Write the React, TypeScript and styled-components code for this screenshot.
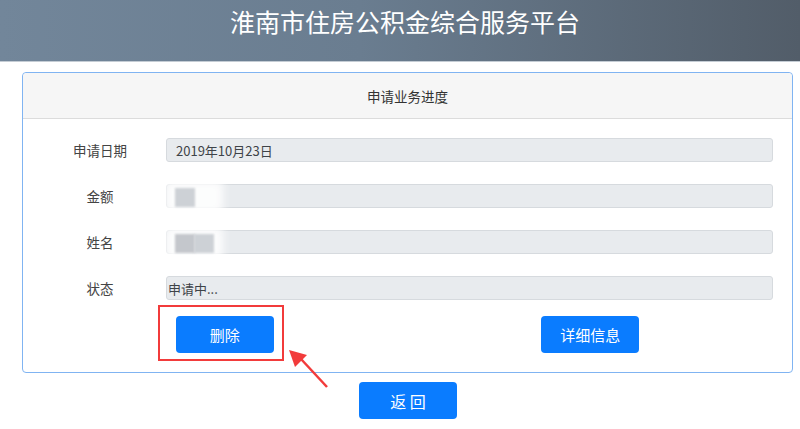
import React from "react";
import styled, { createGlobalStyle } from "styled-components";

interface Field {
  label: string;
  value?: string;
  blur?: "amount" | "name";
  tight?: boolean;
}

const fields: Field[] = [
  { label: "申请日期", value: "2019年10月23日" },
  { label: "金额", blur: "amount" },
  { label: "姓名", blur: "name" },
  { label: "状态", value: "申请中...", tight: true },
];

const App: React.FC = () => {
  return (
    <>
      <GlobalStyle />
      <Page>
        <TopBar>
          <SiteTitle>淮南市住房公积金综合服务平台</SiteTitle>
        </TopBar>
        <Card>
          <CardHeader>申请业务进度</CardHeader>
          <CardBody>
            {fields.map((f) => (
              <FieldRow key={f.label}>
                <Label>{f.label}</Label>
                <ReadOnly $tight={f.tight}>
                  {f.value}
                  {f.blur && (
                    <>
                      <Glow />
                      <Smudge $dark={f.blur === "name"} $x={8} />
                      {f.blur === "name" && <Smudge $dark={false} $x={27} />}
                    </>
                  )}
                </ReadOnly>
              </FieldRow>
            ))}
            <Actions>
              <ActionCell>
                <Marked>
                  <Button>删除</Button>
                  <MarkBox />
                  <Arrow width="48" height="44" viewBox="0 0 48 44">
                    <path d="M42 40 L16 12" stroke="#f23b3b" strokeWidth="2.5" fill="none" />
                    <path d="M4 3 L22 8 L10 20 Z" fill="#f23b3b" />
                  </Arrow>
                </Marked>
              </ActionCell>
              <ActionCell>
                <Button>详细信息</Button>
              </ActionCell>
            </Actions>
          </CardBody>
        </Card>
        <Footer>
          <Button $large>返 回</Button>
        </Footer>
      </Page>
    </>
  );
};

const GlobalStyle = createGlobalStyle`
  html, body {
    margin: 0;
    padding: 0;
    background: #ffffff;
    font-family: "Noto Sans CJK SC", "Noto Sans", "Liberation Sans", sans-serif;
  }
`;

const Page = styled.div`
  width: 800px;
  height: 429px;
  overflow: hidden;
`;

const TopBar = styled.div`
  height: 61px;
  background: linear-gradient(to right, #72869a, #6a7d90 45%, #525d69);
  border-bottom: 1px solid #c4ccd4;
  display: flex;
  justify-content: center;
  padding-left: 10px;
`;

const SiteTitle = styled.h1`
  margin: 5px 0 0;
  font-size: 25px;
  line-height: 32px;
  font-weight: 400;
  color: #ffffff;
`;

const Card = styled.div`
  margin: 10px 7px 0 22px;
  border: 1px solid #80b4f2;
  border-radius: 4px;
  background: #ffffff;
`;

const CardHeader = styled.div`
  height: 45px;
  display: flex;
  align-items: center;
  justify-content: center;
  background: #f6f6f6;
  border-bottom: 1px solid #dcdcdc;
  border-radius: 4px 4px 0 0;
  font-size: 13.5px;
  color: #333333;
`;

const CardBody = styled.div`
  padding: 19px 19px 19px 21px;
  display: flex;
  flex-direction: column;
  gap: 22px;
`;

const FieldRow = styled.div`
  display: grid;
  grid-template-columns: 112px 1fr;
  column-gap: 10px;
  align-items: center;
`;

const Label = styled.div`
  text-align: center;
  font-size: 13.5px;
  color: #444444;
`;

const ReadOnly = styled.div<{ $tight?: boolean }>`
  position: relative;
  height: 22px;
  display: flex;
  align-items: center;
  padding-left: ${(p) => (p.$tight ? "1px" : "9px")};
  background: #e8ebee;
  border: 1px solid #d6dade;
  border-radius: 3px;
  font-size: 13px;
  color: #3e4348;
  overflow: visible;
`;

const Glow = styled.span`
  position: absolute;
  left: -2px;
  top: -4px;
  width: 58px;
  height: 32px;
  background: #ffffff;
  filter: blur(4px);
  opacity: 0.9;
`;

const Smudge = styled.span<{ $dark: boolean; $x: number }>`
  position: absolute;
  left: ${(p) => p.$x}px;
  top: 3px;
  width: 20px;
  height: 19px;
  background: ${(p) => (p.$dark ? "#c4c7cc" : "#cdd1d6")};
  filter: blur(1px);
`;

const Actions = styled.div`
  display: grid;
  grid-template-columns: 1fr 1fr;
  margin-top: -6px;
  margin-left: -2px;
`;

const ActionCell = styled.div`
  display: flex;
  justify-content: center;
`;

const Marked = styled.div`
  position: relative;
  display: inline-flex;
`;

const MarkBox = styled.span`
  position: absolute;
  top: -11px;
  bottom: -8px;
  left: -18px;
  right: -10px;
  border: 2px solid #f23b3b;
  pointer-events: none;
`;

const Arrow = styled.svg`
  position: absolute;
  left: 109px;
  top: 31px;
  overflow: visible;
`;

const Button = styled.button<{ $large?: boolean }>`
  width: 98px;
  height: 37px;
  border: none;
  border-radius: 4px;
  background: #0a7cff;
  color: #ffffff;
  font-family: inherit;
  font-size: ${(p) => (p.$large ? "16px" : "15px")};
  cursor: pointer;
`;

const Footer = styled.div`
  display: flex;
  justify-content: center;
  margin-top: 9px;
  padding-left: 16px;
`;

export default App;
